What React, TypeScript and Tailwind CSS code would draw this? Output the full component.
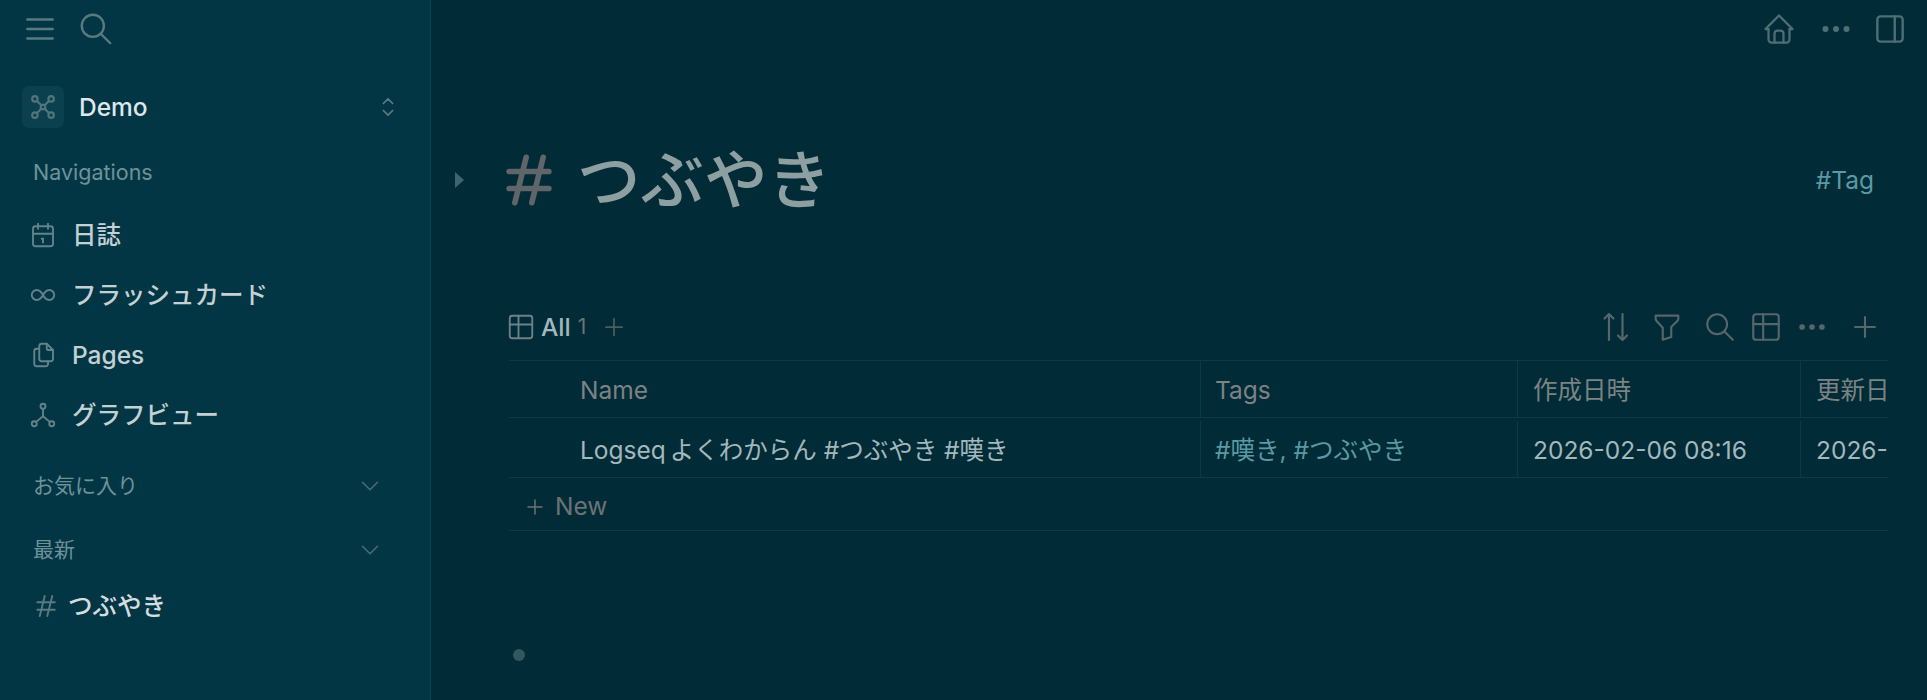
import { TbMenu2, TbSearch, TbSelector, TbCalendar, TbInfinity, TbFiles, TbHierarchy, TbChevronDown, TbHash, TbTable, TbPlus, TbFilter, TbDots, TbHome, TbLayoutSidebarRight } from 'react-icons/tb'

const FONT = "font-['Inter','Noto_Sans_CJK_JP',sans-serif]"

function GraphIcon() {
  return (
    <svg width="26" height="26" viewBox="0 0 24 24" fill="none" stroke="currentColor" strokeWidth="2">
      <circle cx="4.5" cy="4.5" r="2.5" />
      <circle cx="19.5" cy="4.5" r="2.5" />
      <circle cx="4.5" cy="19.5" r="2.5" />
      <circle cx="19.5" cy="19.5" r="2.5" />
      <path d="M6.5 6.5L10 10M17.5 6.5L14 10M6.5 17.5L10 14M17.5 17.5L14 14M10 10h4v4h-4z" />
    </svg>
  )
}

function SortIcon() {
  return (
    <svg width="26" height="30" viewBox="0 0 26 30" fill="none" stroke="currentColor" strokeWidth="2.2" strokeLinecap="round" strokeLinejoin="round">
      <path d="M1.5 6.5L6 2L10.5 6.5M6 2V28" />
      <path d="M15 23.5L19.5 28L24 23.5M19.5 28V2" />
    </svg>
  )
}

const navItems = [
  { icon: <TbCalendar size={30} strokeWidth={1.5} />, label: '日誌' },
  { icon: <TbInfinity size={30} strokeWidth={1.5} />, label: 'フラッシュカード' },
  { icon: <TbFiles size={30} strokeWidth={1.5} />, label: 'Pages' },
  { icon: <TbHierarchy size={30} strokeWidth={1.5} />, label: 'グラフビュー' },
]

function SectionHeader({ label }: { label: string }) {
  return (
    <div className="flex items-center justify-between h-[40px] pl-[33px] pr-[45px] text-[21px] text-[#6f929a]">
      <span>{label}</span>
      <TbChevronDown size={30} strokeWidth={1.25} className="text-[#4a6d75]" />
    </div>
  )
}

function Sidebar() {
  return (
    <aside className="w-[431px] shrink-0 h-full bg-[#023644] border-r border-[#0b404d]">
      <div className="flex items-center h-[58px] pl-[21px] gap-[18px] text-[#5b7a80]">
        <TbMenu2 size={38} strokeWidth={1.5} />
        <TbSearch size={38} strokeWidth={1.5} />
      </div>
      <div className="flex items-center mt-[28px] h-[42px] pl-[22px] pr-[28px]">
        <div className="w-[42px] h-[42px] rounded-[7px] bg-[#0b414e] flex items-center justify-center text-[#50757d]">
          <GraphIcon />
        </div>
        <span className="ml-[15px] flex-1 text-[24.5px] font-medium text-[#dfe7ea]">Demo</span>
        <TbSelector size={28} strokeWidth={1.5} className="text-[#5b7a80]" />
      </div>
      <div className="flex items-center h-[40px] mt-[24px] pl-[33px] text-[21.5px] text-[#6f929a]">Navigations</div>
      <div className="mt-[13px]">
        {navItems.map((item) => (
          <div key={item.label} className="flex items-center h-[60px] pl-[28px] gap-[14px]">
            <span className="w-[30px] flex justify-center text-[#64828a]">{item.icon}</span>
            <span className="text-[24.5px] font-medium text-[#c3d1d5]">{item.label}</span>
          </div>
        ))}
      </div>
      <div className="mt-[21px]">
        <SectionHeader label="お気に入り" />
      </div>
      <div className="mt-[24px]">
        <SectionHeader label="最新" />
      </div>
      <div className="flex items-center h-[40px] mt-[16px] pl-[31px] gap-[7px]">
        <TbHash size={30} strokeWidth={1.5} className="text-[#5b7a80]" />
        <span className="text-[24.5px] font-medium text-[#d3dde0]">つぶやき</span>
      </div>
    </aside>
  )
}

const LINE = 'border-[#073d4a]'

function Table() {
  return (
    <div className={`w-[1379px] overflow-hidden border-t ${LINE} text-[24.5px]`}>
      <div className={`flex h-[57px] border-b ${LINE} text-[#7b8384]`}>
        <div className="w-[691px] shrink-0 pl-[71px] pt-[2px] flex items-center">Name</div>
        <div className={`w-[317px] shrink-0 pl-[14px] pt-[2px] flex items-center border-l ${LINE}`}>Tags</div>
        <div className={`w-[283px] shrink-0 pl-[15px] pt-[2px] flex items-center border-l ${LINE}`}>作成日時</div>
        <div className={`flex-1 pl-[15px] pt-[2px] flex items-center border-l ${LINE} whitespace-nowrap`}>更新日時</div>
      </div>
      <div className={`flex h-[60px] border-b ${LINE} text-[#a3b8bc]`}>
        <div className="w-[691px] shrink-0 pl-[71px] pt-[5px] flex items-center whitespace-nowrap">
          Logseq<span className="inline-block w-[4px]" />よくわからん #つぶやき #嘆き
        </div>
        <div className={`w-[317px] shrink-0 pl-[14px] mt-[3px] pt-[2px] flex items-center border-l ${LINE} text-[#5a99a3]`}>#嘆き, #つぶやき</div>
        <div className={`w-[283px] shrink-0 pl-[15px] mt-[3px] pt-[2px] flex items-center border-l ${LINE}`}>2026-02-06 08:16</div>
        <div className={`flex-1 pl-[15px] mt-[3px] pt-[2px] flex items-center border-l ${LINE} whitespace-nowrap`}>2026-02-06 08:16</div>
      </div>
      <div className={`flex items-center h-[53px] border-b ${LINE} pl-[14px] pt-[5px] gap-[8px] text-[#6b7374]`}>
        <TbPlus size={24} strokeWidth={1.5} />
        <span>New</span>
      </div>
    </div>
  )
}

function Main() {
  return (
    <main className="flex-1 min-w-0 h-full bg-[#002b37] overflow-hidden">
      <div className="flex items-center justify-end h-[58px] pr-[18px] text-[#4f6e75]">
        <TbHome size={36} strokeWidth={1.5} />
        <TbDots size={36} strokeWidth={2} className="ml-[21px]" />
        <TbLayoutSidebarRight size={38} strokeWidth={1.5} className="ml-[17px]" />
      </div>
      <div className="flex items-center h-[80px] mt-[82px] pl-[24px] pr-[53px]">
        <svg width="9" height="16" viewBox="0 0 9 16" className="shrink-0 text-[#3d6570]" fill="currentColor">
          <path d="M0 0L9 8L0 16Z" />
        </svg>
        <TbHash size={68} strokeWidth={2} className="ml-[31px] text-[#5f6568] shrink-0" />
        <span className="ml-[14px] flex-1 text-[63.5px] font-medium leading-none text-[#8d9fa1]">つぶやき</span>
        <span className="text-[24.5px] text-[#5a99a3]">#Tag</span>
      </div>
      <div className="flex items-center h-[40px] mt-[87px] pl-[75px] pr-[45px]">
        <TbTable size={30} strokeWidth={1.5} className="text-[#6b8287]" />
        <span className="ml-[5px] text-[24.5px] font-medium text-[#a3b8bc]">All</span>
        <span className="ml-[7px] text-[21px] text-[#6b7374]">1</span>
        <TbPlus size={28} strokeWidth={1.5} className="ml-[14px] text-[#4d5c5f]" />
        <div className="flex-1" />
        <div className="flex items-center text-[#56666a]">
          <SortIcon />
          <TbFilter size={34} strokeWidth={1.5} className="ml-[21px]" />
          <TbSearch size={34} strokeWidth={1.5} className="ml-[19px]" />
          <TbTable size={34} strokeWidth={1.5} className="ml-[12px]" />
          <TbDots size={34} strokeWidth={2} className="ml-[12px]" />
          <TbPlus size={34} strokeWidth={1.5} className="ml-[19px]" />
        </div>
      </div>
      <div className="mt-[13px] ml-[78px]">
        <Table />
      </div>
      <div className="mt-[118px] ml-[82px] w-[12px] h-[12px] rounded-full bg-[#31585f]" />
    </main>
  )
}

export default function App() {
  return (
    <div className={`flex w-full h-[700px] overflow-hidden ${FONT}`}>
      <Sidebar />
      <Main />
    </div>
  )
}
